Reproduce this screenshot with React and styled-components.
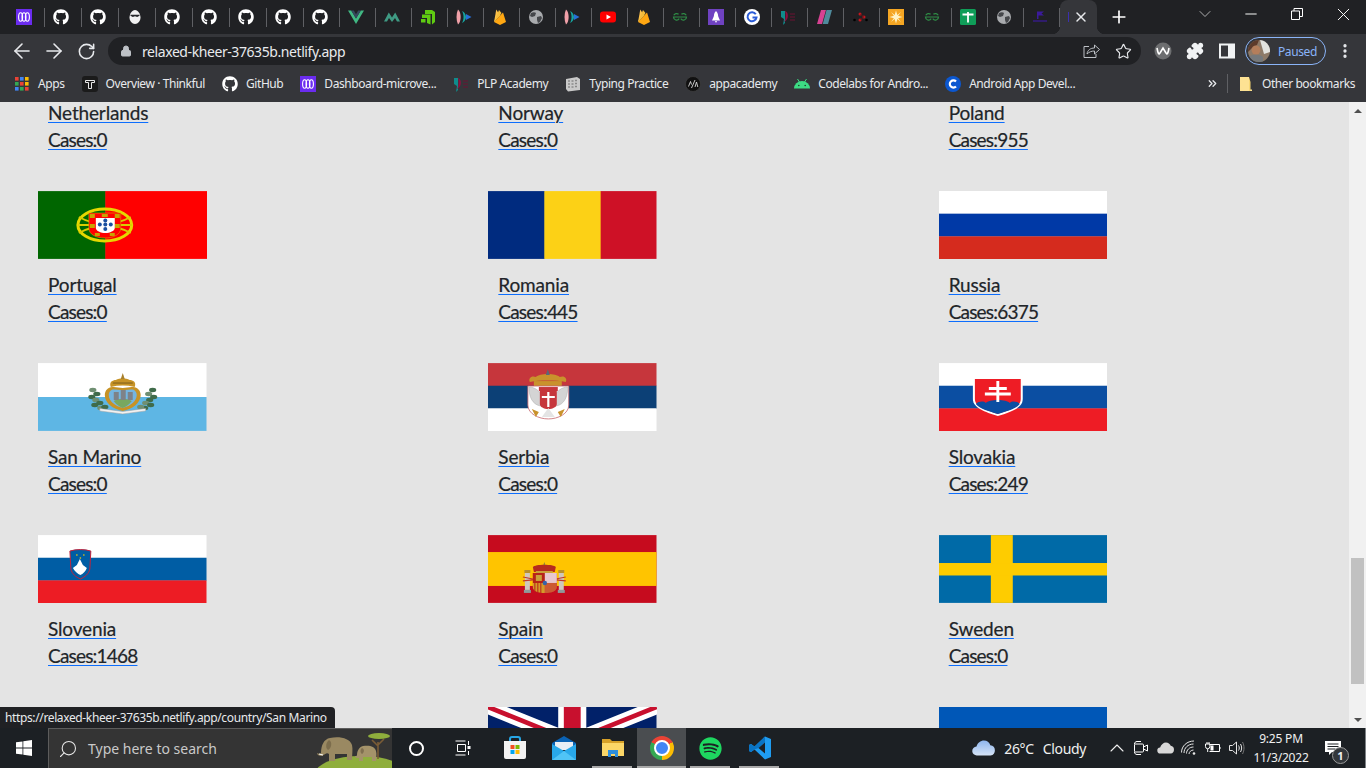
import React from 'react'
import styled, { createGlobalStyle } from 'styled-components'
import { FaGithub, FaSpotify } from 'react-icons/fa'
import {
  ArrowLeft, ArrowRight, RotateCw, Lock, Star, Plus, X, Minus, ChevronDown, ChevronUp,
  MoreVertical, Puzzle, Search, ChevronsRight,
} from 'lucide-react'

const UI_FONT = '"Noto Sans", "Open Sans", sans-serif'

const Global = createGlobalStyle`
  html, body { margin: 0; padding: 0; height: 100%; overflow: hidden; background: #e4e4e4; }
  #root { height: 100%; }
  * { box-sizing: border-box; }
`

/* ---------- small drawings ---------- */

const Ico = styled.svg`
  display: block;
  flex-shrink: 0;
`
const Icon16 = ({ children, size = 16 }) => (
  <Ico width={size} height={size} viewBox="0 0 16 16" fill="none">{children}</Ico>
)

const Microverse = () => (
  <Icon16>
    <rect width="16" height="16" fill="#6b2cf0" />
    <g stroke="#fff" strokeWidth="1.1">
      <ellipse cx="4.6" cy="8" rx="2" ry="4.2" />
      <ellipse cx="8" cy="8" rx="2" ry="4.2" />
      <ellipse cx="11.4" cy="8" rx="2" ry="4.2" />
    </g>
  </Icon16>
)
const Github = () => <FaGithub size={16} color="#fff" />
const Egg = () => (
  <Icon16>
    <path d="M8 1c3 0 5.500 4 5.500 7.600C13.500 12.200 11 15 8 15s-5.500-2.800-5.500-6.400C2.500 5 5 1 8 1z" fill="#f1f1f1" />
    <path d="M3.500 5.800h9v1l-2.300 1.300L8 7.300l-2.200.8L3.500 6.800z" fill="#26272b" />
  </Icon16>
)
const Vue = () => (
  <Icon16>
    <path d="M0 1.500h3.200L8 9.600l4.800-8.100H16L8 15z" fill="#41b883" />
    <path d="M3.200 1.500h2.600L8 5.200l2.200-3.700h2.600L8 9.600z" fill="#35495e" />
  </Icon16>
)
const MintM = () => (
  <Icon16>
    <path d="M0 12.500L4.800 3.500 8 8.500l3.200-5L16 12.500h-3L11 9 8 13 5 9l-2 3.500z" fill="#3f9a83" />
  </Icon16>
)
const GreenSteps = () => (
  <Icon16>
    <path d="M5 1h7l3 2v10l-3 2.500V5H5z" fill="#5fcb12" />
    <path d="M2 5.500h8.500v10L7 14v-5H2zM1 10h4.500v3.500H1z" fill="#5fcb12" />
  </Icon16>
)
const PlpPlay = () => (
  <Icon16>
    <path d="M2 .5C0 5 0 11 2 15.500 5.500 13 5.500 3 2 .5z" fill="#f0a0a8" />
    <path d="M6 2c2 3 2 9 0 12 2.500-1 4-3.500 4-6s-1.500-5-4-6z" fill="#16a3a0" />
    <path d="M10 5l5.500 3-5.500 3z" fill="#2670d8" />
  </Icon16>
)
const Firebase = () => (
  <Icon16>
    <path d="M2 13L4.300 .5 8 6.500z" fill="#ffc24a" />
    <path d="M2 13L11 3.500 14 13l-6 3z" fill="#ffa712" />
    <path d="M2 13L8 6.500 9.500 4 7 1z" fill="#f4bd3c" />
  </Icon16>
)
const Globe = () => (
  <Icon16>
    <circle cx="8" cy="8" r="7" fill="#a9abae" />
    <path d="M3 4c2-1 4-1 5 0l-1 3-3 1-2-1zM9 8l4-1 1 2-2 4-2 1-1-3z" fill="#45474b" />
  </Icon16>
)
const YouTube = () => (
  <Icon16>
    <rect y="2.500" width="16" height="11" rx="3" fill="#f00" />
    <path d="M6.500 5.500l4.500 2.500-4.500 2.500z" fill="#fff" />
  </Icon16>
)
const Gfg = () => (
  <Icon16>
    <g stroke="#2f8d46" strokeWidth="1.200">
      <path d="M8 8H1.500a3.100 3.100 0 0 0 5.700 1.700M1.800 6.300A3.100 3.100 0 0 1 6.600 5.300" />
      <path d="M8 8h6.500a3.100 3.100 0 0 1-5.700 1.700M14.200 6.300a3.100 3.100 0 0 0-4.800-1" />
    </g>
  </Icon16>
)
const Rocket = () => (
  <Icon16>
    <rect width="16" height="16" fill="#6f42c1" />
    <path d="M8 2c2 1.500 2.400 4.500 2 7H6C5.600 6.500 6 3.500 8 2z" fill="#fff" />
    <path d="M6 7L4 11.500h8L10 7zM7 12h2l-1 2z" fill="#fff" />
  </Icon16>
)
const GoogleG = () => (
  <Icon16>
    <circle cx="8" cy="8" r="8" fill="#fff" />
    <path d="M11.800 5.200A4.500 4.500 0 1 0 12.500 8.500H8.500" stroke="#2a5bd7" strokeWidth="2" />
  </Icon16>
)
const PlpD = () => (
  <Icon16>
    <path d="M1 2h4v12l-2 2 1-6-3-2z" fill="#0f8c8c" />
    <path d="M5 2c4 1 4 9-1 11 2-3 2-8 1-11z" fill="#8d1040" />
    <path d="M10 5h5M10 8h5M10 11h5" stroke="#6d1233" strokeWidth="1" />
  </Icon16>
)
const SlantBars = () => (
  <Icon16>
    <path d="M5 1h5L6 15H1z" fill="#d64292" />
    <path d="M10.500 1H16l-4 14H6.700z" fill="#4f8a9c" />
  </Icon16>
)
const RedDots = () => (
  <Icon16>
    <circle cx="8" cy="5" r="1.500" fill="#c5161d" />
    <circle cx="8" cy="11" r="1.500" fill="#c5161d" />
    <circle cx="12" cy="8" r="1.500" fill="#c5161d" />
    <circle cx="2.500" cy="11" r="1.300" fill="#000" />
    <circle cx="14.500" cy="11" r="1.300" fill="#000" />
    <path d="M8 5l4 3-4 3" stroke="#7a1014" strokeWidth=".7" />
  </Icon16>
)
const OrangeBurst = () => (
  <Icon16>
    <rect width="16" height="16" fill="#f5a623" />
    <path d="M8 1.500l1.300 4.400L13 3l-2.900 3.700L14.500 8l-4.400 1.300L13 13 9.300 10.100 8 14.500 6.700 10.100 3 13l2.900-3.700L1.500 8l4.400-1.300L3 3l3.700 2.900z" fill="#fff3c4" />
  </Icon16>
)
const GreenT = () => (
  <Icon16>
    <rect width="16" height="16" rx="1.500" fill="#0f9d58" />
    <path d="M2.500 5.500h11M8 3v10.500" stroke="#fff" strokeWidth="1.800" />
  </Icon16>
)
const DarkFlag = () => (
  <Icon16>
    <path d="M5 2.500h7l-2.500 2 2.500 2H6.500V10H5z" fill="#3b1a9c" />
    <path d="M1 12h14" stroke="#3b1a9c" strokeWidth="1.200" />
  </Icon16>
)
const Thinkful = () => (
  <Icon16>
    <rect width="16" height="16" rx="3" fill="#1b1b1b" />
    <path d="M3.500 4.500h9v2H9.500v6h-3v-6h-3z" stroke="#fff" strokeWidth=".9" />
  </Icon16>
)
const AppsGrid = () => {
  const cols = ['#ea4335', '#4285f4', '#fbbc04', '#34a853', '#ea4335', '#fbbc04', '#4285f4', '#34a853', '#ea4335']
  return (
    <Icon16>
      {cols.map((c, i) => (
        <rect key={i} x={1 + (i % 3) * 5} y={1 + Math.floor(i / 3) * 5} width="3.600" height="3.600" fill={c} />
      ))}
    </Icon16>
  )
}
const TypingTile = () => (
  <Icon16>
    <path d="M1 3l11-2 3 2v11l-12 1.500L1 13z" fill="#c9c9c9" />
    <path d="M3 5h2M6.500 5h2M10 4.500h2M3 8h2M6.500 8h2M10 7.500h2M3 11h2M6.500 11h2M10 10.500h2" stroke="#8a8a8a" strokeWidth="1.300" />
  </Icon16>
)
const AppAcademy = () => (
  <Icon16>
    <circle cx="8" cy="8" r="7.500" fill="#111" stroke="#444" strokeWidth=".6" />
    <path d="M3.500 10.500l2-5 1 3M6.500 12L10 4M10 11l1.500-5 1.300 5" stroke="#d8d8d8" strokeWidth=".9" />
  </Icon16>
)
const Android = () => (
  <Icon16>
    <path d="M0 12.500a8 7.500 0 0 1 16 0z" fill="#3ddc84" />
    <path d="M3.500 3l2 3M12.500 3l-2 3" stroke="#3ddc84" strokeWidth="1" />
    <circle cx="4.800" cy="9.500" r=".8" fill="#1e3a2a" />
    <circle cx="11.200" cy="9.500" r=".8" fill="#1e3a2a" />
  </Icon16>
)
const BlueC = () => (
  <Icon16>
    <circle cx="8" cy="8" r="8" fill="#0b57d0" />
    <path d="M11 5.500a3.600 3.600 0 1 0 0 5" stroke="#fff" strokeWidth="2.200" />
  </Icon16>
)
const Folder = () => (
  <Icon16>
    <path d="M2 1h9v12.500h3V15H2z" fill="#fde293" />
    <path d="M11 1l1.500 5v9H11z" fill="#f7d774" />
  </Icon16>
)
const ShareIcon = () => (
  <Ico width="17" height="16" viewBox="0 0 17 16" fill="none" stroke="#bdc1c6" strokeWidth="1">
    <path d="M6 3.500H1v11h12V11" />
    <path d="M4 11c.5-4 3.500-6 7.500-6V2l5 4.500-5 4.500V8c-3 0-5.500 1-7.500 3z" />
  </Ico>
)
const WExtension = () => (
  <Ico width="18" height="18" viewBox="0 0 18 18" fill="none">
    <circle cx="9" cy="9" r="8.500" fill="#6d6e70" />
    <path d="M3 6c1 6 2 7 3 5l3-5 3 5c1 2 2 1 3-5" stroke="#fff" strokeWidth="1.600" />
  </Ico>
)
const SidePanel = () => (
  <Ico width="16" height="16" viewBox="0 0 16 16">
    <path d="M1 1.500h14v13H1z" fill="none" stroke="#f1f3f4" strokeWidth="2" />
    <rect x="9" y="1" width="6" height="14" fill="#f1f3f4" />
  </Ico>
)
const RestoreIcon = () => (
  <Ico width="12" height="12" viewBox="0 0 12 12" fill="none" stroke="#fff">
    <path d="M.5 3h8v8.500h-8zM3 3V.5h8.500v8H8.500" />
  </Ico>
)
const Avatar = () => (
  <Ico width="22" height="22" viewBox="0 0 22 22">
    <defs><clipPath id="avatar-clip"><circle cx="11" cy="11" r="11" /></clipPath></defs>
    <g clipPath="url(#avatar-clip)">
      <rect width="22" height="22" fill="#8d7a68" />
      <path d="M12 0h10v12l-6 2z" fill="#e2e2de" />
      <path d="M0 0h11L9 5 4 8 0 12z" fill="#5d3b2b" />
      <circle cx="8" cy="10" r="4.500" fill="#b47e5b" />
      <path d="M0 22v-5c4-3 12-3 15 0v5z" fill="#75797c" />
    </g>
  </Ico>
)

/* taskbar */
const WindowsLogo = () => (
  <Ico width="16" height="16" viewBox="0 0 16 16" fill="#fff">
    <path d="M0 2.300L6.500 1.400v6.200H0zM7.300 1.300L16 0v7.600H7.300zM0 8.400h6.500v6.200L0 13.700zM7.300 8.400H16V16l-8.700-1.300z" />
  </Ico>
)
const TaskView = () => (
  <Ico width="17" height="16" viewBox="0 0 17 16" fill="none" stroke="#fff">
    <path d="M.5 1h10M.5 15h10M2.500 4.500h8v7h-8zM13.500 1v4M13.500 11v4" />
    <rect x="12.500" y="6" width="3" height="3" fill="#fff" stroke="none" />
  </Ico>
)
const StoreIcon = () => (
  <Ico width="24" height="24" viewBox="0 0 24 24">
    <path d="M7 6V3a2 2 0 0 1 2-2h6a2 2 0 0 1 2 2v3" fill="none" stroke="#27a6e5" strokeWidth="2" />
    <path d="M1 5h22v16a2 2 0 0 1-2 2H3a2 2 0 0 1-2-2z" fill="#f3f3f3" />
    <rect x="7.500" y="9" width="4" height="4" fill="#f25022" />
    <rect x="12.500" y="9" width="4" height="4" fill="#7fba00" />
    <rect x="7.500" y="14" width="4" height="4" fill="#00a4ef" />
    <rect x="12.500" y="14" width="4" height="4" fill="#ffb900" />
  </Ico>
)
const MailIcon = () => (
  <Ico width="24" height="24" viewBox="0 0 24 24">
    <path d="M12 0l12 7v4H0V7z" fill="#0a62b4" />
    <path d="M3 6h18v8H3z" fill="#e8eef5" />
    <path d="M0 8l12 7 12-7v16H0z" fill="#28a8ea" />
    <path d="M0 24l12-9 12 9z" fill="#50c4f6" />
  </Ico>
)
const ExplorerIcon = () => (
  <Ico width="22" height="20" viewBox="0 0 22 20">
    <path d="M0 1h8l2 2h12v15H0z" fill="#d6a028" />
    <path d="M0 5h22v13H0z" fill="#fbd667" />
    <path d="M6 12h10v7h-3v-3H9v3H6z" fill="#2f8fdc" />
  </Ico>
)
const ChromeLogo = styled.div`
  width: 24px;
  height: 24px;
  border-radius: 50%;
  background: conic-gradient(from 300deg, #ea4335 0 120deg, #fbbc04 120deg 240deg, #34a853 240deg 360deg);
  display: flex;
  align-items: center;
  justify-content: center;
  &::after {
    content: '';
    width: 12px;
    height: 12px;
    border-radius: 50%;
    background: #4285f4;
    border: 2px solid #fff;
  }
`
const VsCode = () => (
  <Ico width="24" height="24" viewBox="0 0 24 24">
    <path d="M17 .5L6.500 10.500 3 8 1 9v6l2 1 3.500-2.500L17 23.500l6-2.500V3z" fill="#1f9cf0" />
    <path d="M17 .5L6.500 10.500 3 8 1 9v6l2 1 3.500-2.500 4-1.500L17 6.500z" fill="#0a74c4" />
    <path d="M17 6.500L10.500 12l6.500 5.500z" fill="#1c2024" />
  </Ico>
)
const Elephants = () => (
  <Ico width="77" height="40" viewBox="0 0 77 40">
    <ellipse cx="46" cy="46" rx="46" ry="18" fill="#8fae3c" />
    <path d="M63 31V14M63 18l-6-6M63 17l6-6" stroke="#7a5c36" strokeWidth="1.600" fill="none" />
    <ellipse cx="64" cy="8" rx="11" ry="3" fill="#8fae3c" />
    <path d="M7 28c-3 0-5-1-5-3 1 1 3 1 4 0 0-8 3-14 9-15 9-2 20 0 22 7 1 4 0 10 0 15h-5v-6H20v7h-6v-7c-2-2-4 0-7 2z" fill="#9a8962" />
    <path d="M14 12c-3 2-4 8-1 10 3-1 5-8 1-10z" fill="#7c6d4c" />
    <path d="M42 30c-1 0-2-1-2-2 1 0 2 0 2-1 0-4 2-8 6-9 6-1 12 0 13 5 1 3 0 7 0 10h-4v-4H48v4h-4v-3z" fill="#a4936a" />
    <path d="M47 20c-2 1-2 5 0 6 2-1 3-5 0-6z" fill="#806f50" />
    <path d="M4 26l4 1" stroke="#fff" strokeWidth="1" />
  </Ico>
)
const CloudIcon = () => (
  <Ico width="24" height="16" viewBox="0 0 24 16">
    <defs>
      <linearGradient id="cloud-grad" x1="0" x2="0" y1="0" y2="1">
        <stop offset="0" stopColor="#8fb6ee" />
        <stop offset="1" stopColor="#d5e3f6" />
      </linearGradient>
    </defs>
    <path d="M5 15.500a4.500 4.500 0 0 1-.5-9C5.500 3 8.500.5 12 .5c3 0 5.500 2 6.300 4.700a5.200 5.200 0 0 1 .2 10.300z" fill="url(#cloud-grad)" />
  </Ico>
)
const MeetIcon = () => (
  <Ico width="16" height="18" viewBox="0 0 16 18" fill="none" stroke="#fff" strokeWidth="1">
    <path d="M1.500 5c0-1.500 1-2.500 2.500-2.500h4M1.500 13c0 1.500 1 2.500 2.500 2.500h4" />
    <rect x="1.500" y="5" width="9" height="8" rx="1" />
    <path d="M10.500 8l4-2v6l-4-2z" />
  </Ico>
)
const OneDrive = () => (
  <Ico width="17" height="12" viewBox="0 0 17 12">
    <path d="M3.500 11.500a3 3 0 0 1-.4-6C4 2.500 6.500.5 9 .5c2.200 0 4 1.300 4.700 3.300a3.900 3.900 0 0 1 0 7.700z" fill="#d8d8d8" />
  </Ico>
)
const WifiIcon = () => (
  <Ico width="16" height="16" viewBox="0 0 16 16" fill="none" stroke="#e6e6e6">
    <path d="M.5 12.500C.5 6 6 1 13 1M3 13c0-5 4-9 9.500-9M5.500 13.500c0-3.500 3-6.500 7-6.500M8 14c0-2 2-4 4.500-4" />
    <circle cx="13" cy="13.500" r="1.300" fill="#e6e6e6" stroke="none" />
  </Ico>
)
const BatteryIcon = () => (
  <Ico width="16" height="14" viewBox="0 0 16 14" fill="none" stroke="#fff">
    <path d="M4.500 3.500h10v7h-10" />
    <rect x="5.500" y="4.500" width="3" height="5" fill="#fff" stroke="none" />
    <path d="M15 6v2" />
    <path d="M.5 3v2.500a2.200 2.200 0 0 0 4.400 0V3zM2 1v2M4 1v2M2.700 8v3" />
  </Ico>
)
const SpeakerIcon = () => (
  <Ico width="16" height="16" viewBox="0 0 16 16" fill="none" stroke="#e6e6e6">
    <path d="M.5 5.500h3l4-3.500v12l-4-3.500h-3z" />
    <path d="M9.500 5.500c1 1.500 1 3.500 0 5M11.500 4c1.500 2.500 1.500 5.500 0 8" />
    <path d="M13.500 2c2 3.500 2 8.500 0 12" stroke="#777" />
  </Ico>
)
const NotificationIcon = () => (
  <Ico width="16" height="15" viewBox="0 0 16 15">
    <path d="M0 0h16v11H7l-3 3v-3H0z" fill="#fff" />
    <path d="M2.500 3h11M2.500 5.500h11M2.500 8h8" stroke="#1c2024" strokeWidth="1" />
  </Ico>
)

/* ---------- flags ---------- */

const FlagSvg = styled.svg`
  display: block;
  width: 168.5px;
  height: 68px;
`
const Arms = styled.g`
  filter: blur(0.45px);
`
const Stripes = ({ colors }) => (
  <FlagSvg viewBox="0 0 169 68" preserveAspectRatio="none">
    {colors.map((c, i) => (
      <rect key={c + i} y={(68 / colors.length) * i} width="169" height={68 / colors.length + 0.2} fill={c} />
    ))}
  </FlagSvg>
)
const Netherlands = () => <Stripes colors={['#ae1c28', '#fff', '#21468b']} />
const Norway = () => <Stripes colors={['#ba0c2f', '#00205b', '#ba0c2f']} />
const Poland = () => <Stripes colors={['#fff', '#dc143c']} />
const Russia = () => <Stripes colors={['#fff', '#0039a6', '#d52b1e']} />
const Ukraine = () => <Stripes colors={['#0057b7', '#ffd700']} />
const Switzerland = () => <Stripes colors={['#d52b1e']} />

const Portugal = () => (
  <FlagSvg viewBox="0 0 169 68">
    <rect width="68" height="68" fill="#006600" />
    <rect x="67.500" width="102" height="68" fill="#f00" />
    <Arms>
      <ellipse cx="67" cy="34" rx="27" ry="16" fill="none" stroke="#e6d800" strokeWidth="3" />
      <path d="M41 26c16 9 36 9 52 0M40 34h54M41 42c16-9 36-9 52 0" fill="none" stroke="#d9cc00" strokeWidth="1.800" />
      <path d="M51 22h32v15c0 7-8 10-16 10s-16-3-16-10z" fill="#f00" stroke="#d9a400" strokeWidth=".6" />
      <g fill="#c9a400">
        <rect x="52" y="23" width="5" height="4" />
        <rect x="77" y="23" width="5" height="4" />
        <rect x="64" y="23" width="6" height="3" />
        <rect x="52" y="33" width="5" height="4" />
        <rect x="77" y="33" width="5" height="4" />
        <rect x="57" y="42" width="5" height="3" />
        <rect x="72" y="42" width="5" height="3" />
      </g>
      <path d="M58 27h19v10c0 3-5 5-9.500 5S58 40 58 37z" fill="#fff" />
      <g fill="#1a4fa0">
        <circle cx="67.500" cy="29.500" r="2" />
        <circle cx="62" cy="33.500" r="2" />
        <circle cx="67.500" cy="33.500" r="2" />
        <circle cx="73" cy="33.500" r="2" />
        <circle cx="67.500" cy="38" r="2" />
      </g>
    </Arms>
  </FlagSvg>
)
const Romania = () => (
  <FlagSvg viewBox="0 0 169 68">
    <rect width="57" height="68" fill="#002b7f" />
    <rect x="56.500" width="57" height="68" fill="#fcd116" />
    <rect x="113" width="56" height="68" fill="#ce1126" />
  </FlagSvg>
)
const leaves = [
  [55, 27], [59, 31], [54, 34], [58, 37], [62, 40], [57, 42], [63, 45], [67, 44],
  [115, 27], [111, 31], [116, 34], [112, 37], [108, 40], [113, 42], [107, 45], [103, 44],
]
const SanMarino = () => (
  <FlagSvg viewBox="0 0 169 68">
    <rect width="169" height="34" fill="#fff" />
    <rect y="34" width="169" height="34" fill="#5eb6e4" />
    <Arms>
      {leaves.map(([x, y], i) => (
        <ellipse key={i} cx={x} cy={y} rx="3.600" ry="2.200" fill={i % 3 ? '#3f6b4a' : '#6f8f72'} />
      ))}
      <path d="M62 48l23 3 23-3v-2.500l-23 3-23-3z" fill="#f2f2f2" stroke="#a0a0a0" strokeWidth=".5" />
      <path d="M85 48c-10-2-18-8-18-16 0-5 4-9 9-8l9 1 9-1c5-1 9 3 9 8 0 8-8 14-18 16z" fill="#c79326" />
      <path d="M85 45c-8-2-14-7-14-13 0-4 3-6 6-5.500l8 .8 8-.8c3-.5 6 1.500 6 5.500 0 6-6 11-14 13z" fill="#74b5e0" />
      <path d="M76 38c5-3 13-3 18 0-3 4-6 6-9 7-3-1-6-3-9-7z" fill="#78a860" />
      <g fill="#7e8288">
        <rect x="76" y="29" width="5" height="8" />
        <rect x="83" y="27" width="5" height="10" />
        <rect x="90" y="29" width="5" height="8" />
      </g>
      <path d="M73 24c-2-5 2-7 5-7 4-2 10-2 14 0 3 0 7 2 5 7-8-2-16-2-24 0z" fill="#c79326" />
      <path d="M83 16l2-6 2 6z" fill="#a8802c" />
      <path d="M75 20h20" stroke="#7a5c1c" strokeWidth="1" />
    </Arms>
  </FlagSvg>
)
const Serbia = () => (
  <FlagSvg viewBox="0 0 169 68">
    <rect width="169" height="23" fill="#c6363c" />
    <rect y="22.700" width="169" height="23" fill="#0c4076" />
    <rect y="45.400" width="169" height="23" fill="#fff" />
    <Arms>
      <path d="M42 19c-2-4 2-7 6-5 4-4 20-4 24 0 4-2 8 1 6 5-10-2-26-2-36 0z" fill="#c9922c" />
      <path d="M58 12l2-6 2 6z" fill="#5a6a78" />
      <path d="M46 18h28v5H46z" fill="#c9922c" />
      <path d="M40 23h41v19c0 9-11 14-20.500 14S40 51 40 42z" fill="#fff" stroke="#c6666c" strokeWidth=".8" />
      <path d="M41 24c6 0 11 4 13 9v10c-6 0-13-5-13-19zM80 24c-6 0-11 4-13 9v10c6 0 13-5 13-19z" fill="#d4d4d4" stroke="#a9a9a9" strokeWidth=".5" />
      <path d="M51 24h19v4H51z" fill="#c6363c" />
      <path d="M52 28h17v13c0 3-4 5-8.500 5S52 44 52 41z" fill="#c6363c" />
      <path d="M60.500 29v15M54 34h13" stroke="#fff" strokeWidth="2.200" />
      <path d="M44 46l7 3-3 5zM77 46l-7 3 3 5z" fill="#c9922c" />
      <path d="M54 54l6.500-9 6.500 9z" fill="#e4e4e4" />
    </Arms>
  </FlagSvg>
)
const Slovakia = () => (
  <FlagSvg viewBox="0 0 169 68">
    <rect width="169" height="23" fill="#fff" />
    <rect y="22.700" width="169" height="23" fill="#0b4ea2" />
    <rect y="45.400" width="169" height="23" fill="#ee1c25" />
    <Arms>
      <path d="M34 16h50v20c0 9-12 13-25 17-13-4-25-8-25-17z" fill="#fff" />
      <path d="M36 16h46v20c0 8-11 11-23 15-12-4-23-7-23-15z" fill="#ee1c25" />
      <path d="M37 41c3-3 8-3 10-1 3-4 21-4 24 0 2-2 7-2 10 1-4 5-12 7-22 10-10-3-18-5-22-10z" fill="#0b4ea2" />
      <path d="M59 18v21M50 25.500h18M46 31h26" stroke="#fff" strokeWidth="2.900" />
    </Arms>
  </FlagSvg>
)
const Slovenia = () => (
  <FlagSvg viewBox="0 0 169 68">
    <rect width="169" height="23" fill="#fff" />
    <rect y="22.700" width="169" height="23" fill="#005da4" />
    <rect y="45.400" width="169" height="23" fill="#ed1c24" />
    <Arms>
      <path d="M32 16c6-2 15-2 21 0l-1 18c-1 5-5 8-9.500 10-4.500-2-8.500-5-9.500-10z" fill="#005da4" stroke="#c4223a" strokeWidth="1" />
      <path d="M35 33l4-3 3-6 3 6 4 3c-1 3-4 6-6.500 7-2.500-1-6-4-7.500-7z" fill="#fff" />
      <g fill="#ffd200">
        <circle cx="39" cy="20" r=".8" />
        <circle cx="46" cy="20" r=".8" />
        <circle cx="42.500" cy="23" r=".8" />
      </g>
    </Arms>
  </FlagSvg>
)
const Spain = () => (
  <FlagSvg viewBox="0 0 169 68">
    <rect width="169" height="68" fill="#c60b1e" />
    <rect y="17" width="169" height="34" fill="#ffc400" />
    <Arms>
      <rect x="37" y="38" width="5" height="17" fill="#cfc7bd" />
      <rect x="71" y="38" width="5" height="17" fill="#cfc7bd" />
      <rect x="36.500" y="35" width="6" height="3" fill="#b8902c" />
      <rect x="70.500" y="35" width="6" height="3" fill="#b8902c" />
      <rect x="36" y="55" width="7" height="3" fill="#8f9a9a" />
      <rect x="70" y="55" width="7" height="3" fill="#8f9a9a" />
      <path d="M35 42l10 2M35 46l10-1M78 42l-10 2M78 46l-10-1" stroke="#c0392b" strokeWidth="1.200" />
      <path d="M45 32c2-3 21-3 23 0l-1 5H46z" fill="#b52b1e" />
      <path d="M48 36h17v2H48z" fill="#c9a13a" />
      <path d="M55.500 30l1-3 1 3z" fill="#8a7a3a" />
      <path d="M45 38h24v14c0 4-5 6-12 6s-12-2-12-6z" fill="#c8412c" />
      <rect x="45" y="38" width="12" height="10" fill="#b72318" />
      <rect x="57" y="38" width="12" height="10" fill="#e8c8d0" />
      <rect x="48" y="40" width="6" height="6" fill="#c9a13a" />
      <path d="M45 48h12v10c-7 0-12-2-12-6z" fill="#d49b2a" />
      <path d="M47 48v9M50 48v10M53 48v10" stroke="#b72318" strokeWidth="1" />
      <path d="M57 48h12v4c0 4-5 6-12 6z" fill="#cc5a32" />
      <circle cx="57" cy="48" r="2.200" fill="#3763a8" />
    </Arms>
  </FlagSvg>
)
const Sweden = () => (
  <FlagSvg viewBox="0 0 169 68">
    <rect width="169" height="68" fill="#006aa7" />
    <rect x="52" width="22" height="68" fill="#fecc00" />
    <rect y="28" width="169" height="12.500" fill="#fecc00" />
  </FlagSvg>
)
const UnitedKingdom = () => (
  <FlagSvg viewBox="0 0 60 30" preserveAspectRatio="none">
    <rect width="60" height="30" fill="#012169" />
    <path d="M0 0l60 30M60 0L0 30" stroke="#fff" strokeWidth="6" />
    <path d="M0 0l30 15M60 0L30 15" stroke="#c8102e" strokeWidth="2" />
    <path d="M30 0v30M0 15h60" stroke="#fff" strokeWidth="10" />
    <path d="M30 0v30M0 15h60" stroke="#c8102e" strokeWidth="6" />
  </FlagSvg>
)

/* last row only peeks in at the fold, so it has no caption here */
const countries = [
  { name: 'Netherlands', cases: 0, Flag: Netherlands },
  { name: 'Norway', cases: 0, Flag: Norway },
  { name: 'Poland', cases: 955, Flag: Poland },
  { name: 'Portugal', cases: 0, Flag: Portugal },
  { name: 'Romania', cases: 445, Flag: Romania },
  { name: 'Russia', cases: 6375, Flag: Russia },
  { name: 'San Marino', cases: 0, Flag: SanMarino },
  { name: 'Serbia', cases: 0, Flag: Serbia },
  { name: 'Slovakia', cases: 249, Flag: Slovakia },
  { name: 'Slovenia', cases: 1468, Flag: Slovenia },
  { name: 'Spain', cases: 0, Flag: Spain },
  { name: 'Sweden', cases: 0, Flag: Sweden },
  { Flag: Switzerland },
  { Flag: UnitedKingdom },
  { Flag: Ukraine },
]

const tabIcons = [
  Microverse, Github, Github, Egg, Github, Github, Github, Github, Github,
  Vue, MintM, GreenSteps, PlpPlay, Firebase, Globe, PlpPlay, YouTube, Firebase, Gfg,
  Rocket, GoogleG, PlpD, SlantBars, RedDots, OrangeBurst, Gfg, GreenT, Globe, DarkFlag,
]

const bookmarks = [
  { label: 'Apps', Icon: AppsGrid },
  { label: 'Overview · Thinkful', Icon: Thinkful },
  { label: 'GitHub', Icon: Github },
  { label: 'Dashboard-microve...', Icon: Microverse },
  { label: 'PLP Academy', Icon: PlpD },
  { label: 'Typing Practice', Icon: TypingTile },
  { label: 'appacademy', Icon: AppAcademy },
  { label: 'Codelabs for Andro...', Icon: Android },
  { label: 'Android App Devel...', Icon: BlueC },
]

/* ---------- browser chrome ---------- */

const Screen = styled.div`
  width: 1366px;
  height: 768px;
  display: flex;
  flex-direction: column;
  overflow: hidden;
  font-family: ${UI_FONT};
`
const TabStrip = styled.div`
  height: 34px;
  flex-shrink: 0;
  background: #202124;
  display: flex;
  padding-left: 8px;
`
const Tab = styled.div`
  width: ${(p) => (p.$wide ? 37 : 36)}px;
  padding-left: 8px;
  display: flex;
  align-items: center;
`
const TabDivider = styled.span`
  margin-left: auto;
  width: 1px;
  height: 19px;
  background: #5f6064;
`
const ActiveTab = styled.div`
  position: relative;
  width: 37px;
  padding-left: 8px;
  background: #35363a;
  border-radius: 8px 8px 0 0;
  display: flex;
  align-items: center;
  gap: 4px;
  &::before, &::after {
    content: '';
    position: absolute;
    bottom: 0;
    width: 8px;
    height: 8px;
  }
  &::before { left: -8px; background: radial-gradient(circle at 0 0, transparent 8px, #35363a 8.500px); }
  &::after { right: -8px; background: radial-gradient(circle at 100% 0, transparent 8px, #35363a 8.500px); }
`
const LoadingMark = styled.span`
  width: 1px;
  height: 10px;
  background: #3b2fb0;
`
const NewTab = styled.div`
  margin-left: 12px;
  display: flex;
  align-items: center;
`
const WindowControls = styled.div`
  margin-left: auto;
  display: flex;
`
const WindowButton = styled.div`
  width: 46px;
  height: 28px;
  display: flex;
  align-items: center;
  justify-content: center;
`
const Toolbar = styled.div`
  height: 34px;
  flex-shrink: 0;
  background: #35363a;
  display: flex;
  align-items: center;
  padding-left: 6px;
`
const ToolButton = styled.div`
  width: 32px;
  height: 28px;
  display: flex;
  align-items: center;
  justify-content: center;
`
const Omnibox = styled.div`
  width: 1033px;
  height: 28px;
  margin: 0 6px;
  padding: 0 2px 0 12px;
  border-radius: 14px;
  background: #202124;
  display: flex;
  align-items: center;
`
const Url = styled.span`
  margin-left: 10px;
  color: #e8eaed;
  font-size: 14px;
  letter-spacing: -0.42px;
`
const OmniActions = styled.div`
  margin-left: auto;
  display: flex;
`
const ProfilePill = styled.div`
  width: 81px;
  height: 28px;
  margin-left: 2px;
  padding-left: 2px;
  border: 1px solid #8ab4f8;
  border-radius: 14px;
  display: flex;
  align-items: center;
  gap: 8px;
  color: #8ab4f8;
  font-size: 12px;
  letter-spacing: -0.4px;
`
const MenuButton = styled(ToolButton)`
  margin-left: 3px;
`
const BookmarkBar = styled.div`
  height: 34px;
  flex-shrink: 0;
  background: #35363a;
  display: flex;
  align-items: center;
  gap: 17px;
  padding: 0 11px 3px 14px;
  color: #e8eaed;
  font-size: 12px;
  letter-spacing: -0.42px;
`
const Bookmark = styled.div`
  display: flex;
  align-items: center;
  gap: 8px;
  white-space: nowrap;
`
const BookmarkTail = styled.div`
  margin-left: auto;
  display: flex;
  align-items: center;
`
const TailDivider = styled.span`
  width: 1px;
  height: 19px;
  margin: 0 10px 0 8px;
  background: #5f6064;
`

/* ---------- page ---------- */

const Viewport = styled.div`
  flex: 1;
  min-height: 0;
  display: flex;
  background: #e4e4e4;
`
const Content = styled.main`
  position: relative;
  flex: 1;
  overflow: hidden;
`
const Grid = styled.div`
  display: grid;
  grid-template-columns: repeat(3, 450.33px);
  grid-auto-rows: 172px;
  margin-top: -83px;
  padding-left: 38px;
`
const Card = styled.div`
  display: flex;
  flex-direction: column;
  align-items: flex-start;
`
const CardBody = styled.div`
  margin-top: 12px;
  padding-left: 10px;
  display: flex;
  flex-direction: column;
  align-items: flex-start;
`
const CountryLink = styled.a`
  color: #212529;
  font-family: Lato, sans-serif;
  font-size: 19px;
  line-height: 27px;
  letter-spacing: ${(p) => (p.$tight ? -0.8 : -0.15)}px;
  -webkit-text-stroke: 0.2px #212529;
  text-decoration: underline;
  text-decoration-color: #0d6efd;
  text-decoration-thickness: 1px;
  text-underline-offset: 2px;
`
const StatusBubble = styled.div`
  position: absolute;
  left: 0;
  bottom: 0;
  width: 335px;
  height: 21px;
  padding-left: 5px;
  background: #202124;
  border-radius: 0 4px 0 0;
  color: #e8eaed;
  font-size: 12px;
  letter-spacing: -0.37px;
  line-height: 21px;
  white-space: nowrap;
`
const Scrollbar = styled.div`
  width: 17px;
  flex-shrink: 0;
  background: #f1f1f1;
  display: flex;
  flex-direction: column;
`
const ScrollArrow = styled.div`
  height: 17px;
  flex-shrink: 0;
  display: flex;
  align-items: center;
  justify-content: center;
  &::before {
    content: '';
    border-left: 4px solid transparent;
    border-right: 4px solid transparent;
    ${(p) => (p.$down ? 'border-top: 4px solid #505050;' : 'border-bottom: 4px solid #505050;')}
  }
`
const ScrollTrack = styled.div`
  flex: 1;
  padding: 439px 2px 0;
`
const ScrollThumb = styled.div`
  height: 126px;
  background: #c1c1c1;
`

/* ---------- taskbar ---------- */

const Taskbar = styled.footer`
  height: 40px;
  flex-shrink: 0;
  background: #1c2024;
  display: flex;
  color: #f0f0f0;
`
const StartButton = styled.div`
  width: 48px;
  display: flex;
  align-items: center;
  justify-content: center;
`
const SearchBox = styled.div`
  width: 344px;
  padding-left: 9px;
  background: #343434;
  border: 1px solid #5c5c5c;
  border-width: 1px 0 0 1px;
  display: flex;
  align-items: center;
  gap: 10px;
  color: #c9c9c9;
  font-size: 14px;
  overflow: hidden;
`
const SearchGlass = styled(Search)`
  transform: scaleX(-1);
`
const SearchArt = styled.div`
  margin-left: auto;
  align-self: flex-end;
`
const TaskButton = styled.div`
  position: relative;
  width: ${(p) => p.$w || 49}px;
  display: flex;
  align-items: center;
  justify-content: center;
  background: ${(p) => (p.$active ? '#4a4d50' : 'transparent')};
  &::after {
    content: ${(p) => (p.$running ? "''" : 'none')};
    position: absolute;
    bottom: 0;
    left: ${(p) => (p.$active ? 0 : 4)}px;
    right: ${(p) => (p.$active ? 0 : 5)}px;
    height: 2px;
    background: #a9a9a9;
  }
`
const Cortana = styled.span`
  width: 15px;
  height: 15px;
  border: 2px solid #fff;
  border-radius: 50%;
`
const TaskGap = styled.span`
  width: 3px;
`
const Tray = styled.div`
  margin-left: auto;
  display: flex;
  align-items: center;
`
const Weather = styled.div`
  display: flex;
  align-items: center;
  gap: 8px;
  margin-right: 19px;
  font-size: 14px;
  letter-spacing: -0.35px;
`
const WeatherText = styled.span`
  display: flex;
  gap: 9px;
`
const TrayIcon = styled.div`
  width: 24px;
  display: flex;
  justify-content: center;
`
const Clock = styled.div`
  width: 64px;
  text-align: center;
  font-size: 12px;
  letter-spacing: -0.2px;
  line-height: 19px;
`
const NotifyButton = styled.div`
  position: relative;
  width: 40px;
  height: 40px;
  display: flex;
  align-items: center;
  justify-content: center;
`
const NotifyBadge = styled.span`
  position: absolute;
  left: 19px;
  top: 19px;
  width: 17px;
  height: 17px;
  border-radius: 50%;
  border: 1px solid #9a9a9a;
  background: #33373b;
  color: #f0f0f0;
  font-size: 11px;
  font-weight: 700;
  line-height: 15px;
  text-align: center;
`
const DesktopPeek = styled.div`
  width: 13px;
  height: 40px;
  border-right: 1px solid #7e8286;
`

const App = () => (
  <>
    <Global />
    <Screen>
      <TabStrip>
        {tabIcons.map((Icon, i) => (
          <Tab key={i} $wide={i < 8}>
            <Icon />
            <TabDivider />
          </Tab>
        ))}
        <ActiveTab>
          <LoadingMark />
          <X size={16} color="#e8eaed" strokeWidth={2.2} />
        </ActiveTab>
        <NewTab><Plus size={20} color="#fff" strokeWidth={2} /></NewTab>
        <WindowControls>
          <WindowButton><ChevronDown size={20} color="#c8c8c8" strokeWidth={1} /></WindowButton>
          <WindowButton><Minus size={18} color="#fff" strokeWidth={1.3} /></WindowButton>
          <WindowButton><RestoreIcon /></WindowButton>
          <WindowButton><X size={21} color="#fff" strokeWidth={1.1} /></WindowButton>
        </WindowControls>
      </TabStrip>

      <Toolbar>
        <ToolButton><ArrowLeft size={24} color="#e8eaed" strokeWidth={1.6} /></ToolButton>
        <ToolButton><ArrowRight size={24} color="#e8eaed" strokeWidth={1.6} /></ToolButton>
        <ToolButton><RotateCw size={19} color="#e8eaed" strokeWidth={2} /></ToolButton>
        <Omnibox>
          <Lock size={12} color="#bdc1c6" fill="#bdc1c6" />
          <Url>relaxed-kheer-37635b.netlify.app</Url>
          <OmniActions>
            <ToolButton><ShareIcon /></ToolButton>
            <ToolButton><Star size={17} color="#e8eaed" strokeWidth={1.6} /></ToolButton>
          </OmniActions>
        </Omnibox>
        <ToolButton><WExtension /></ToolButton>
        <ToolButton><Puzzle size={18} color="#f1f3f4" fill="#f1f3f4" /></ToolButton>
        <ToolButton><SidePanel /></ToolButton>
        <ProfilePill><Avatar />Paused</ProfilePill>
        <MenuButton><MoreVertical size={18} color="#e8eaed" strokeWidth={2.4} /></MenuButton>
      </Toolbar>

      <BookmarkBar>
        {bookmarks.map(({ label, Icon }) => (
          <Bookmark key={label}><Icon />{label}</Bookmark>
        ))}
        <BookmarkTail>
          <ChevronsRight size={13} color="#e8eaed" strokeWidth={2.4} />
          <TailDivider />
          <Bookmark><Folder />Other bookmarks</Bookmark>
        </BookmarkTail>
      </BookmarkBar>

      <Viewport>
        <Content>
          <Grid>
            {countries.map(({ name, cases, Flag }, i) => (
              <Card key={i}>
                <Flag />
                {name && (
                  <CardBody>
                    <CountryLink href="#">{name}</CountryLink>
                    <CountryLink href="#" $tight>{`Cases:${cases}`}</CountryLink>
                  </CardBody>
                )}
              </Card>
            ))}
          </Grid>
          <StatusBubble>https://relaxed-kheer-37635b.netlify.app/country/San Marino</StatusBubble>
        </Content>
        <Scrollbar>
          <ScrollArrow />
          <ScrollTrack><ScrollThumb /></ScrollTrack>
          <ScrollArrow $down />
        </Scrollbar>
      </Viewport>

      <Taskbar>
        <StartButton><WindowsLogo /></StartButton>
        <SearchBox>
          <SearchGlass size={20} color="#e6e6e6" strokeWidth={1.3} />
          Type here to search
          <SearchArt><Elephants /></SearchArt>
        </SearchBox>
        <TaskButton $w={48}><Cortana /></TaskButton>
        <TaskButton $w={47}><TaskView /></TaskButton>
        <TaskGap />
        <TaskButton><StoreIcon /></TaskButton>
        <TaskButton><MailIcon /></TaskButton>
        <TaskButton $running><ExplorerIcon /></TaskButton>
        <TaskButton $running $active><ChromeLogo /></TaskButton>
        <TaskButton $running><FaSpotify size={23} color="#1ed760" /></TaskButton>
        <TaskButton $running><VsCode /></TaskButton>
        <Tray>
          <Weather>
            <CloudIcon />
            <WeatherText><span>26°C</span><span>Cloudy</span></WeatherText>
          </Weather>
          <TrayIcon><ChevronUp size={28} color="#f0f0f0" strokeWidth={1.1} /></TrayIcon>
          <TrayIcon><MeetIcon /></TrayIcon>
          <TrayIcon><OneDrive /></TrayIcon>
          <TrayIcon><WifiIcon /></TrayIcon>
          <TrayIcon><BatteryIcon /></TrayIcon>
          <TrayIcon><SpeakerIcon /></TrayIcon>
          <Clock>9:25 PM<br />11/3/2022</Clock>
          <NotifyButton>
            <NotificationIcon />
            <NotifyBadge>1</NotifyBadge>
          </NotifyButton>
          <DesktopPeek />
        </Tray>
      </Taskbar>
    </Screen>
  </>
)

export default App
